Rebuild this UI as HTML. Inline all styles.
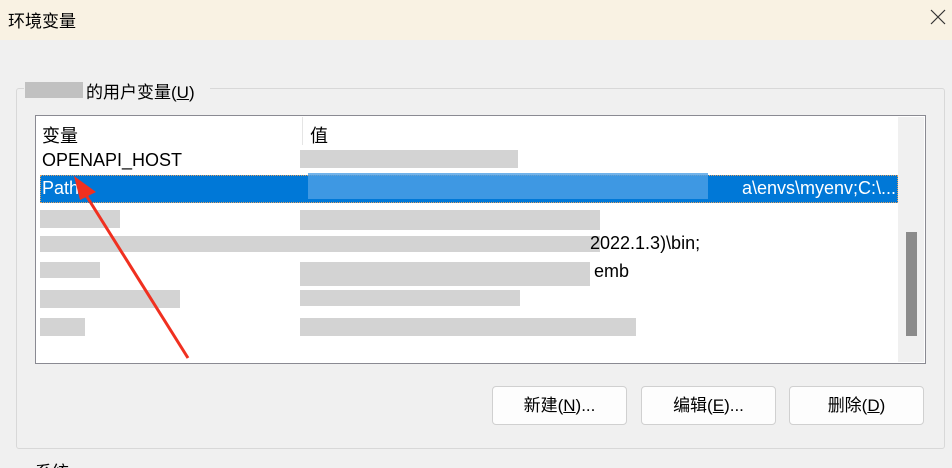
<!DOCTYPE html>
<html><head><meta charset="utf-8"><style>
*{margin:0;padding:0;box-sizing:border-box}
html,body{width:952px;height:468px;overflow:hidden}
body{background:#f0f0f0;font-family:"Liberation Sans","Noto Sans CJK SC",sans-serif;position:relative;color:#000}
.t{position:absolute;background:#f9f2e3;left:0;top:0;width:952px;height:40px}
.abs{position:absolute}
.btn{position:absolute;top:386px;width:135px;height:39px;background:#fdfdfd;border:1px solid #d0d0d0;border-radius:4px;font-size:17px;text-align:center;line-height:37px}
.row{position:absolute;left:42px;font-size:18px;white-space:nowrap}
.bl{position:absolute;background:#c8c8c8;opacity:.8}
</style></head><body>
<div class="t"></div>
<div class="abs" style="left:8px;top:7px;font-size:17px">环境变量</div>
<svg class="abs" style="left:930px;top:9px" width="16" height="16"><path d="M1 1L15 15M15 1L1 15" stroke="#333" stroke-width="1.2"/></svg>
<div class="abs" style="left:16px;top:88px;width:929px;height:361px;border:1px solid #d8d8d8;border-radius:3px"></div>
<div class="abs" style="left:24px;top:78px;width:186px;height:22px;background:#f0f0f0"></div>
<div class="bl" style="left:25px;top:82px;width:58px;height:16px;background:#b5b5b5"></div>
<div class="abs" style="left:86px;top:78px;font-size:17px">的用户变量(<u>U</u>)</div>
<div class="abs" style="left:35px;top:115px;width:891px;height:249px;background:#fff;border:1px solid #8a8a92"></div>
<div class="abs" style="left:898px;top:117px;width:26px;height:245px;background:#f0f0f0"></div>
<div class="abs" style="left:906px;top:232px;width:11px;height:104px;background:#8b8b8b"></div>
<div class="abs" style="left:302px;top:117px;width:1px;height:28px;background:#e5e5e5"></div>
<div class="row" style="top:122px">变量</div>
<div class="row" style="left:310px;top:122px">值</div>
<div class="row" style="top:150px">OPENAPI_HOST</div>
<div class="bl" style="left:300px;top:150px;width:218px;height:18px"></div>
<div class="abs" style="left:40px;top:175px;width:858px;height:28px;background:#0078d7;border:1px dotted #e0a060"></div>
<div class="row" style="top:178px;color:#fff">Path</div>
<div class="abs" style="left:308px;top:173px;width:400px;height:26px;background:#4da0e6;opacity:.8"></div>
<div class="row" style="left:742px;top:178px;color:#fff">a\envs\myenv;C:\...</div>
<div class="bl" style="left:40px;top:210px;width:80px;height:18px"></div>
<div class="bl" style="left:300px;top:210px;width:300px;height:20px"></div>
<div class="bl" style="left:40px;top:236px;width:560px;height:16px"></div>
<div class="row" style="left:590px;top:233px">2022.1.3)\bin;</div>
<div class="bl" style="left:40px;top:262px;width:60px;height:16px"></div>
<div class="bl" style="left:300px;top:262px;width:290px;height:24px"></div>
<div class="row" style="left:594px;top:261px">emb</div>
<div class="bl" style="left:40px;top:290px;width:140px;height:18px"></div>
<div class="bl" style="left:300px;top:290px;width:220px;height:16px"></div>
<div class="bl" style="left:40px;top:318px;width:45px;height:18px"></div>
<div class="bl" style="left:300px;top:318px;width:336px;height:18px"></div>
<svg class="abs" style="left:0;top:0" width="952" height="468"><path d="M188 358L84 192" stroke="#f03020" stroke-width="3"/><path d="M74 176L96 192L80 200Z" fill="#f03020"/></svg>
<div class="btn" style="left:492px">新建(<u>N</u>)...</div>
<div class="btn" style="left:641px">编辑(<u>E</u>)...</div>
<div class="btn" style="left:789px">删除(<u>D</u>)</div>
<div class="abs" style="left:35px;top:458px;font-size:17px">系统</div>
</body></html>
